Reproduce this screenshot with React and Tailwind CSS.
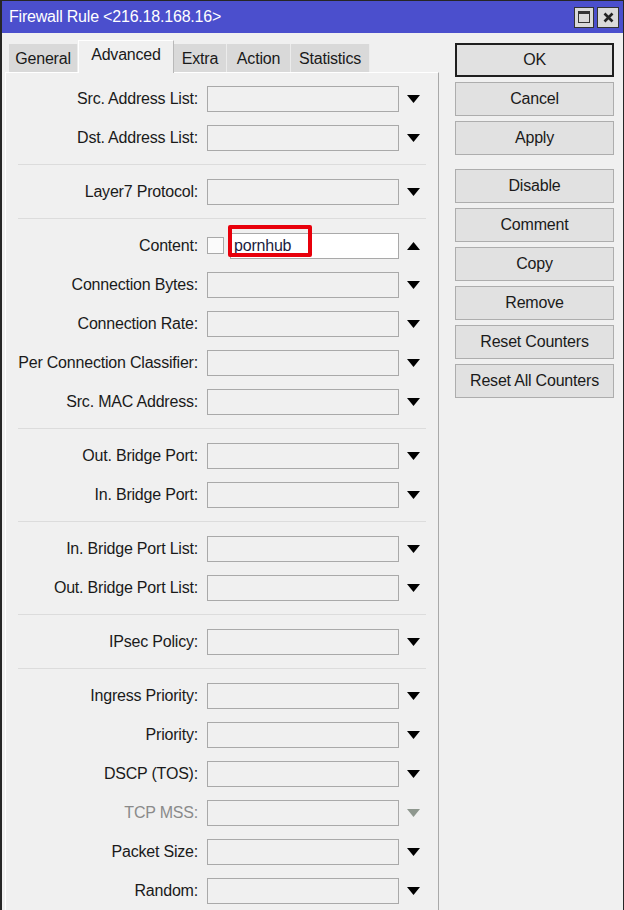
const ROWS = [
  { label: "Src. Address List:" },
  { label: "Dst. Address List:" },
  "sep",
  { label: "Layer7 Protocol:" },
  "sep",
  { label: "Content:", content: true },
  { label: "Connection Bytes:" },
  { label: "Connection Rate:" },
  { label: "Per Connection Classifier:" },
  { label: "Src. MAC Address:" },
  "sep",
  { label: "Out. Bridge Port:" },
  { label: "In. Bridge Port:" },
  "sep",
  { label: "In. Bridge Port List:" },
  { label: "Out. Bridge Port List:" },
  "sep",
  { label: "IPsec Policy:" },
  "sep",
  { label: "Ingress Priority:" },
  { label: "Priority:" },
  { label: "DSCP (TOS):" },
  { label: "TCP MSS:", disabled: true },
  { label: "Packet Size:" },
  { label: "Random:" }
];

const BUTTONS = [
  ["OK", "Cancel", "Apply"],
  ["Disable", "Comment", "Copy", "Remove", "Reset Counters", "Reset All Counters"]
];

const TABS = [
  { name: "General", w: "w-[69px]" },
  { name: "Advanced", w: "w-[96px]", active: true },
  { name: "Extra", w: "w-[53px]" },
  { name: "Action", w: "w-[64px]" },
  { name: "Statistics", w: "w-[79px]" }
];

function Arrow({ up, disabled }) {
  return (
    <svg width="13" height="8" viewBox="0 0 13 8" className="ml-[8px] shrink-0">
      <polygon
        points={up ? "0,8 13,8 6.5,0" : "0,0 13,0 6.5,8"}
        fill={disabled ? "#8e978e" : "#000"}
      />
    </svg>
  );
}

function FieldRow({ row }) {
  return (
    <div className="relative flex h-[39px] items-center">
      <div
        className={`w-[192px] text-right ${row.disabled ? "text-[#8a8a8a]" : "text-[#1a1a1a]"}`}
      >
        {row.label}
      </div>
      {row.content ? (
        <div className="ml-[9px] flex w-[192px] items-center">
          <div className="h-[17px] w-[17px] border border-[#a9a9a9] bg-[#fbfbfb]" />
          <div className="ml-[6px] flex h-[26px] flex-1 items-center border border-[#a9a9a9] bg-white pl-[3px] text-[#1b1b40]">
            pornhub
          </div>
          <div className="absolute left-[222px] top-[-1px] h-[32px] w-[84px] rounded-[2px] border-[4px] border-[#e8000b]" />
        </div>
      ) : (
        <div className="ml-[9px] h-[26px] w-[192px] border border-[#a9a9a9] bg-[#f0f0f0]" />
      )}
      <Arrow up={row.content} disabled={row.disabled} />
    </div>
  );
}

export default function App() {
  return (
    <div
      className="h-[910px] w-[624px] overflow-hidden bg-[#262626] pl-[2px] pr-[1px] pt-[1px] text-[16px] tracking-[-0.2px]"
      style={{ fontFamily: '"Liberation Sans", Arial, sans-serif' }}
    >
      <div className="flex h-full flex-col bg-[#f0f0f0]">
        <div className="flex h-[32px] shrink-0 items-center bg-[#4b4fcd] pl-[7px] pr-[4px] text-white">
          <span className="flex-1">Firewall Rule &lt;216.18.168.16&gt;</span>
          <div className="flex gap-[3px]">
            <div className="flex h-[21px] w-[20px] items-center justify-center border border-[#333] bg-[#d9d9d9]">
              <div className="h-[12px] w-[12px] border-[1.5px] border-t-[3px] border-[#333]" />
            </div>
            <div className="flex h-[21px] w-[22px] items-center justify-center border border-[#333] bg-[#d9d9d9]">
              <svg width="11" height="11" viewBox="0 0 11 11">
                <path d="M1.5 1.5 L9.5 9.5 M9.5 1.5 L1.5 9.5" stroke="#222" strokeWidth="2.6" />
              </svg>
            </div>
          </div>
        </div>

        <div className="flex flex-1">
          <div className="ml-[3px] flex w-[434px] flex-col">
            <div className="flex h-[39px] items-end pl-[4px]">
              {TABS.map((tab) =>
                tab.active ? (
                  <div
                    key={tab.name}
                    className={`relative z-10 -mb-[1px] flex h-[33px] items-center justify-center border-l border-r border-t border-l-white border-r-[#b9b9b9] border-t-white bg-[#f0f0f0] pb-[4px] text-[#1a1a1a] ${tab.w}`}
                  >
                    {tab.name}
                  </div>
                ) : (
                  <div
                    key={tab.name}
                    className={`flex h-[28px] items-center justify-center border-r border-r-[#ececec] bg-[#d9d9d9] pt-[2px] text-[#1a1a1a] ${tab.w}`}
                  >
                    {tab.name}
                  </div>
                )
              )}
            </div>
            <div className="flex-1 border-l border-r border-t border-l-white border-r-[#a9a9a9] border-t-white pt-[6px]">
              {ROWS.map((row, i) =>
                row === "sep" ? (
                  <div key={i} className="flex h-[15px] items-center pl-[12px]">
                    <div className="h-px w-[408px] bg-[#dcdcdc]" />
                  </div>
                ) : (
                  <FieldRow key={i} row={row} />
                )
              )}
            </div>
          </div>

          <div className="ml-[16px] mt-[10px] flex w-[159px] flex-col gap-[14px]">
            {BUTTONS.map((group, gi) => (
              <div key={gi} className="flex flex-col gap-[5px]">
                {group.map((label) => (
                  <div
                    key={label}
                    className={`flex h-[34px] items-center justify-center bg-[#e1e1e1] text-[#1a1a1a] ${
                      label === "OK" ? "border-2 border-[#1f1f1f]" : "border border-[#adadad]"
                    }`}
                  >
                    {label}
                  </div>
                ))}
              </div>
            ))}
          </div>
        </div>
      </div>
    </div>
  );
}
